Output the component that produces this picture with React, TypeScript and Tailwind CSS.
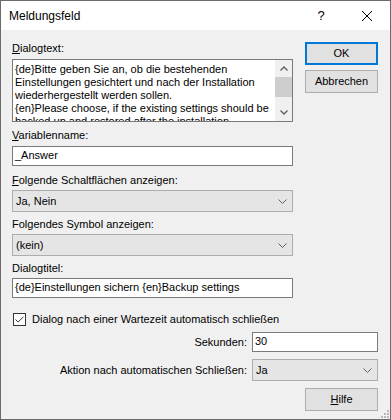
import React from 'react';

const font = "font-['Liberation_Sans',Arial,sans-serif]";

function Chevron() {
  return (
    <svg width="9" height="5" viewBox="0 0 9 5" className="block">
      <path d="M0.5 0.5 L4.5 4.5 L8.5 0.5" fill="none" stroke="#606060" strokeWidth="1" />
    </svg>
  );
}

function ComboBox({ value, className = '' }: { value: string; className?: string }) {
  return (
    <div
      className={`h-[22px] flex items-center justify-between border border-[#adadad] bg-[#e5e5e5] pl-[3px] pr-[5px] ${className}`}
    >
      <span className="leading-[13px]">{value}</span>
      <Chevron />
    </div>
  );
}

function TextBox({ value, className = '' }: { value: string; className?: string }) {
  return (
    <div className={`h-[20px] border border-[#7a7a7a] bg-white pl-[2px] pt-[2px] leading-[13px] ${className}`}>
      {value}
    </div>
  );
}

function Button({ children, primary = false, className = '' }: { children: React.ReactNode; primary?: boolean; className?: string }) {
  return (
    <div
      className={`h-[23px] w-[73px] flex items-center justify-center bg-[#e1e1e1] leading-[13px] ${
        primary ? 'border-2 border-[#0078d7]' : 'border border-[#adadad]'
      } ${className}`}
    >
      {children}
    </div>
  );
}

export default function App() {
  return (
    <div className={`relative w-[391px] h-[420px] border border-[#6b6b6b] bg-[#f0f0f0] text-[11px] text-black ${font} flex flex-col`}>
      {/* title bar */}
      <div className="h-[29px] bg-white flex items-center shrink-0">
        <span className="pl-[8px] text-[12px] leading-[14px] flex-1">Meldungsfeld</span>
        <div className="w-[46px] h-full flex items-center justify-center text-[13px] leading-[14px]">?</div>
        <div className="w-[46px] h-full flex items-center justify-center">
          <svg width="10" height="10" viewBox="0 0 10 10">
            <path d="M0 0 L10 10 M10 0 L0 10" stroke="#000" strokeWidth="1" />
          </svg>
        </div>
      </div>

      <div className="pl-[11px] pr-[12px]">
        <div className="flex">
          {/* left column */}
          <div className="w-[281px] flex flex-col">
            <label className="mt-[12px] leading-[13px]">
              <span className="underline">D</span>ialogtext:
            </label>
            <div className="mt-[4px] h-[63px] border border-[#7a7a7a] bg-white flex overflow-hidden">
              <div className="flex-1 pl-[2px] pt-[3px] leading-[13px] whitespace-nowrap overflow-hidden">
                <div>{'{de}'}Bitte geben Sie an, ob die bestehenden</div>
                <div>Einstellungen gesichtert und nach der Installation</div>
                <div>wiederhergestellt werden sollen.</div>
                <div>{'{en}'}Please choose, if the existing settings should be</div>
                <div>backed up and restored after the installation.</div>
              </div>
              <div className="w-[17px] bg-[#f0f0f0] flex flex-col items-center">
                <div className="h-[17px] flex items-center justify-center">
                  <svg width="8" height="5" viewBox="0 0 8 5">
                    <path d="M0.5 4.5 L4 1 L7.5 4.5" fill="none" stroke="#606060" strokeWidth="1.4" />
                  </svg>
                </div>
                <div className="w-[17px] h-[20px] bg-[#cdcdcd]" />
                <div className="flex-1" />
                <div className="h-[17px] flex items-center justify-center">
                  <svg width="8" height="5" viewBox="0 0 8 5">
                    <path d="M0.5 0.5 L4 4 L7.5 0.5" fill="none" stroke="#606060" strokeWidth="1.4" />
                  </svg>
                </div>
              </div>
            </div>

            <label className="mt-[7px] leading-[13px]">
              <span className="underline">V</span>ariablenname:
            </label>
            <TextBox value="_Answer" className="mt-[4px]" />

            <label className="mt-[8px] leading-[13px]">
              <span className="underline">F</span>olgende Schaltflächen anzeigen:
            </label>
            <ComboBox value="Ja, Nein" className="mt-[3px]" />

            <label className="mt-[6px] leading-[13px]">Folgendes Symbol anzeigen:</label>
            <ComboBox value="(kein)" className="mt-[3px]" />

            <label className="mt-[6px] leading-[13px]">Dialogtitel:</label>
            <TextBox value="{de}Einstellungen sichern {en}Backup settings" className="mt-[3px]" />
          </div>

          {/* right column */}
          <div className="ml-[12px] flex flex-col">
            <Button primary className="mt-[12px]">OK</Button>
            <Button className="mt-[5px]">Abbrechen</Button>
          </div>
        </div>

        {/* checkbox */}
        <div className="mt-[15px] flex items-center h-[13px] pl-[1px]">
          <div className="w-[13px] h-[13px] border border-[#333] bg-white flex items-center justify-center">
            <svg width="9" height="7" viewBox="0 0 9 7">
              <path d="M0.5 3.5 L3.2 6 L8.5 0.7" fill="none" stroke="#333" strokeWidth="1" />
            </svg>
          </div>
          <span className="ml-[6px] leading-[13px]">Dialog nach einer Wartezeit automatisch schließen</span>
        </div>

        <div className="mt-[6px] flex items-center">
          <span className="flex-1 text-right pr-[5px] leading-[13px]">Sekunden:</span>
          <TextBox value="30" className="w-[126px]" />
        </div>

        <div className="mt-[7px] flex items-center">
          <span className="flex-1 text-right pr-[5px] leading-[13px]">Aktion nach automatischen Schließen:</span>
          <ComboBox value="Ja" className="w-[126px]" />
        </div>

        <div className="mt-[7px] flex justify-end">
          <Button>
            <span>
              <span className="underline">H</span>ilfe
            </span>
          </Button>
        </div>
      </div>

      {/* resize grip */}
      <svg width="8" height="8" viewBox="0 0 8 8" className="absolute right-[1px] bottom-[1px]">
        <rect x="6" y="0" width="2" height="2" fill="#b8b8b8" />
        <rect x="3" y="3" width="2" height="2" fill="#b8b8b8" />
        <rect x="6" y="3" width="2" height="2" fill="#b8b8b8" />
        <rect x="0" y="6" width="2" height="2" fill="#b8b8b8" />
        <rect x="3" y="6" width="2" height="2" fill="#b8b8b8" />
        <rect x="6" y="6" width="2" height="2" fill="#b8b8b8" />
      </svg>
    </div>
  );
}
